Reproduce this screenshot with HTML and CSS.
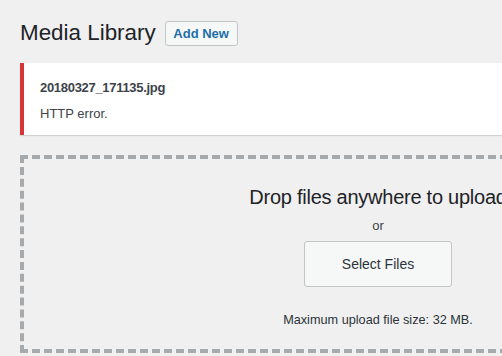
FILE: index.html
```html
<!DOCTYPE html>
<html>
<head>
<meta charset="utf-8">
<link rel="stylesheet" href="styles.css">
</head>
<body>
<div class="wrap">
  <div class="head">
    <h1 class="title">Media Library</h1>
    <a class="add-new">Add New</a>
  </div>
  <div class="notice">
    <div class="file-name">20180327_171135.jpg</div>
    <div class="error">HTTP error.</div>
  </div>
  <div class="uploader">
    <p class="drop">Drop files anywhere to upload</p>
    <p class="or">or</p>
    <button class="select">Select Files</button>
    <p class="max">Maximum upload file size: 32 MB.</p>
  </div>
</div>
</body>
</html>
```
FILE: styles.css
```css
html, body {
  margin: 0;
  padding: 0;
  background: #f0f0f1;
  overflow: hidden;
}
body {
  font-family: "Liberation Sans", Arial, sans-serif;
  color: #1d2327;
  width: 760px;
}
.wrap {
  padding: 20px 0 0 20px;
}
.head {
  display: flex;
  align-items: center;
  gap: 9px;
  height: 26px;
}
.title {
  margin: 0;
  font-size: 22.4px;
  font-weight: 400;
  line-height: 26px;
  color: #1d2327;
}
.add-new {
  display: block;
  box-sizing: border-box;
  height: 25px;
  width: 73px;
  border: 1px solid #c3c4c7;
  border-radius: 3px;
  background: #f6f7f7;
  color: #1e6fa8;
  font-size: 13px;
  font-weight: 700;
  line-height: 23px;
  text-align: center;
}
.notice {
  margin-top: 17px;
  box-sizing: border-box;
  height: 72px;
  width: 720px;
  background: #fff;
  border-left: 4px solid #d63638;
  box-shadow: 0 1px 1px rgba(0,0,0,0.12);
  padding: 16px 0 0 16px;
  font-size: 13px;
  color: #3c434a;
}
.file-name {
  font-weight: 700;
  line-height: 18px;
  letter-spacing: -0.3px;
}
.error {
  margin-top: 8px;
  line-height: 18px;
}
.uploader {
  margin-top: 20px;
  box-sizing: border-box;
  width: 716px;
  height: 198px;
  border: 4px dashed #a7aaad;
  display: flex;
  flex-direction: column;
  align-items: center;
  padding-top: 24px;
}
.uploader p {
  margin: 0;
}
.drop {
  font-size: 20px;
  line-height: 28px;
  letter-spacing: -0.25px;
  color: #1d2327;
}
.or {
  font-size: 13px;
  line-height: 18px;
  margin-top: 6px !important;
  color: #3c434a;
}
.select {
  margin-top: 6px;
  width: 148px;
  height: 46px;
  border: 1px solid #c3c4c7;
  border-radius: 3px;
  background: #f6f7f7;
  font-family: inherit;
  font-size: 14px;
  color: #2c3338;
}
.max {
  margin-top: 24px !important;
  font-size: 12.7px;
  line-height: 18px;
  color: #2c3338;
}
```
